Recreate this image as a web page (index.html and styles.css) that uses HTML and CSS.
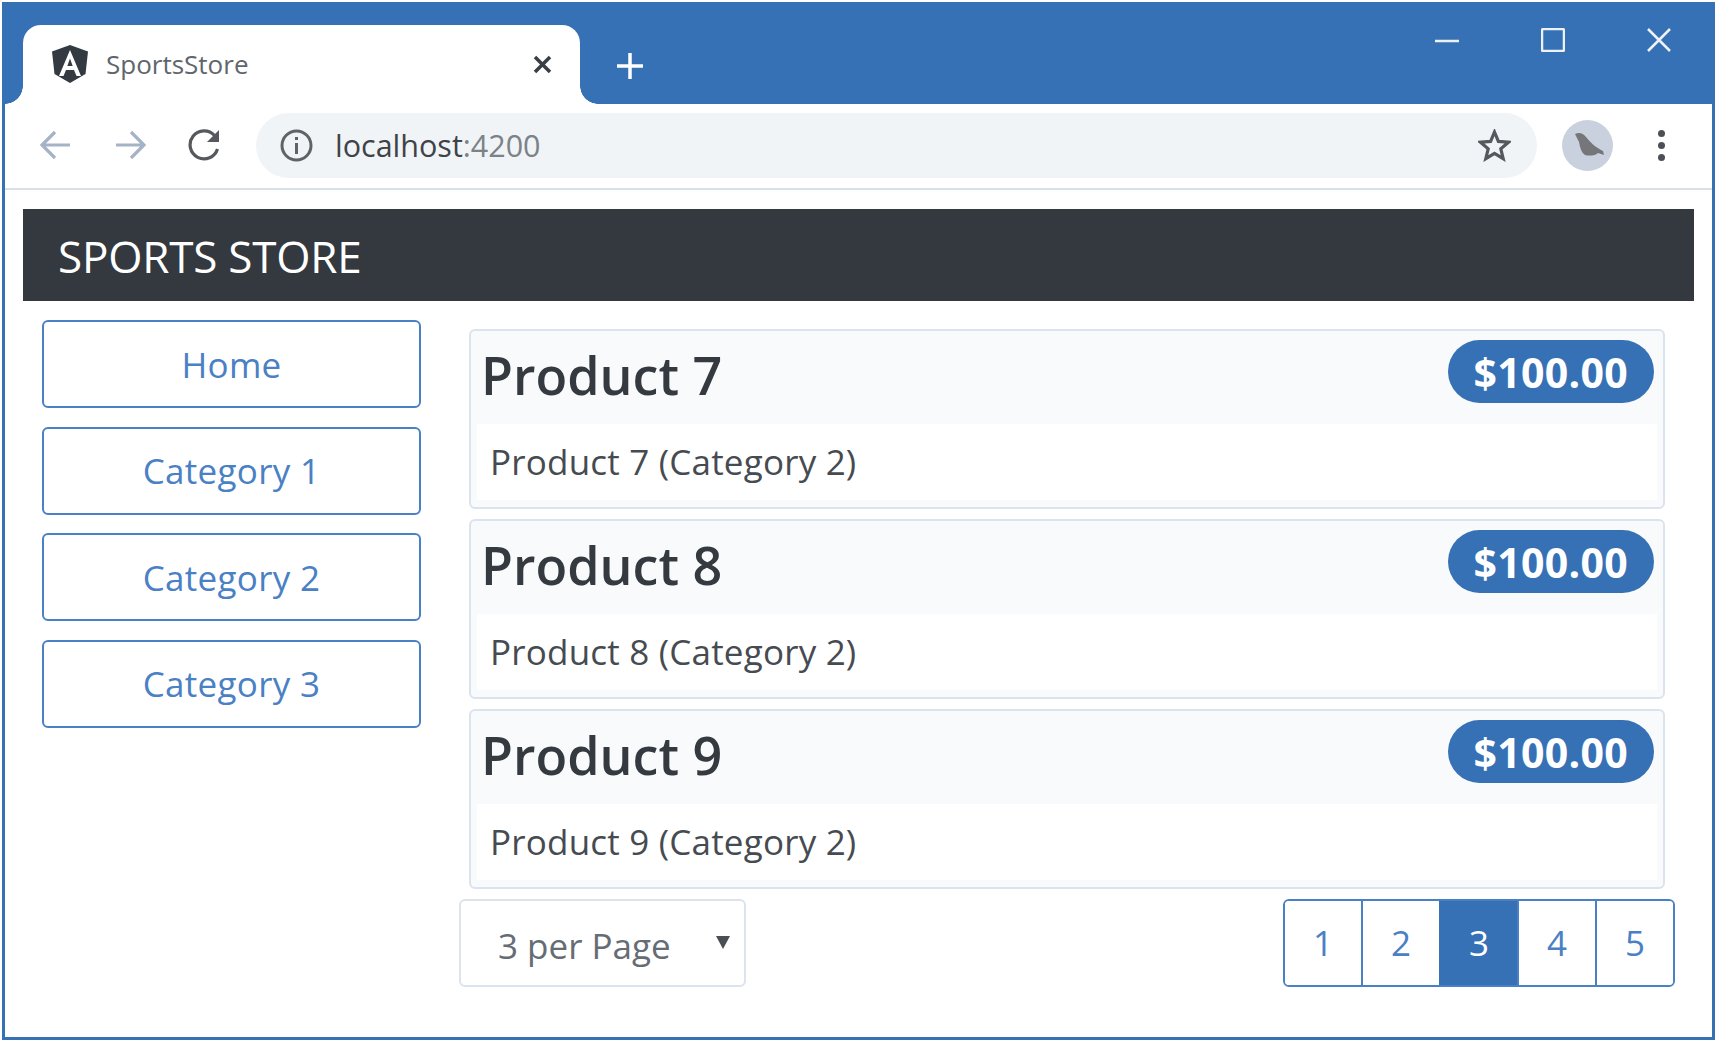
FILE: index.html
```html
<!DOCTYPE html>
<html lang="en">
<head>
    <meta charset="UTF-8">
    <meta name="viewport" content="width=device-width, initial-scale=1.0">
    <title>SportsStore</title>
    <link rel="stylesheet" href="styles.css">
</head>
<body>
    <div class="window">
        <!-- Browser title bar -->
        <div class="titlebar">
            <div class="tab">
                <svg class="tab-logo" viewBox="0 0 38 38">
                    <path class="logo-shield" d="M19 0 L37 6.500 L34.500 29 L19 38 L3.500 29 L1 6.500 Z"/>
                    <path class="logo-a" d="M19 5 L8 31 L12.500 31 L15 25 L23 25 L25.500 31 L30 31 Z M19 13.500 L21.700 21 L16.300 21 Z"/>
                </svg>
                <span class="tab-title">SportsStore</span>
                <svg class="tab-close" viewBox="0 0 19 19">
                    <path d="M2 2 L17 17 M17 2 L2 17"/>
                </svg>
            </div>
            <svg class="new-tab" viewBox="0 0 28 28">
                <path d="M14 1 V27 M1 14 H27"/>
            </svg>
            <div class="window-controls">
                <div class="control">
                    <svg viewBox="0 0 24 24"><path d="M0 13 H24"/></svg>
                </div>
                <div class="control">
                    <svg viewBox="0 0 24 24"><rect x="1" y="1" width="22" height="22" rx="1.500"/></svg>
                </div>
                <div class="control">
                    <svg viewBox="0 0 24 24"><path d="M1 1 L23 23 M23 1 L1 23"/></svg>
                </div>
            </div>
        </div>

        <!-- Browser toolbar -->
        <div class="toolbar">
            <svg class="nav-icon nav-off" viewBox="0 0 32 32">
                <path d="M30 16 H3 M15 3 L2 16 L15 29"/>
            </svg>
            <svg class="nav-icon nav-off" viewBox="0 0 32 32">
                <path d="M2 16 H29 M17 3 L30 16 L17 29"/>
            </svg>
            <svg class="nav-icon nav-on" viewBox="0 0 32 32">
                <path d="M29.500 20 A14 14 0 1 1 26.500 6.500"/>
                <path class="reload-tip" d="M31 1 V13 H19 Z"/>
            </svg>
            <div class="omnibox">
                <svg class="info-icon" viewBox="0 0 33 33">
                    <circle cx="16.500" cy="16.500" r="14.500"/>
                    <path d="M16.500 14 V25"/>
                    <path d="M16.500 8 V11"/>
                </svg>
                <span class="url">localhost<span class="url-port">:4200</span></span>
                <svg class="star-icon" viewBox="0 0 33 33">
                    <path d="M16.500 3 L20.400 12.400 L30.500 13.200 L22.800 19.800 L25.200 29.700 L16.500 24.400 L7.800 29.700 L10.200 19.800 L2.500 13.200 L12.600 12.400 Z"/>
                </svg>
            </div>
            <div class="avatar">
                <svg viewBox="0 0 51 51">
                    <path class="bird" d="M13 14 C17 12 21 13 24 17 C28 22 33 27 41 31 L42 35 L36 33 C33 36 27 36 23 35 C19 32 18 27 17 22 Z"/>
                </svg>
            </div>
            <div class="menu-dots">
                <span></span>
                <span></span>
                <span></span>
            </div>
        </div>

        <!-- Store page -->
        <div class="page">
            <div class="navbar">SPORTS STORE</div>
            <div class="content">
                <div class="sidebar">
                    <button class="cat-btn">Home</button>
                    <button class="cat-btn">Category 1</button>
                    <button class="cat-btn">Category 2</button>
                    <button class="cat-btn">Category 3</button>
                </div>
                <div class="main">
                    <div class="product">
                        <div class="product-head">
                            <h4>Product 7</h4>
                            <span class="price">$100.00</span>
                        </div>
                        <div class="product-body">Product 7 (Category 2)</div>
                    </div>
                    <div class="product">
                        <div class="product-head">
                            <h4>Product 8</h4>
                            <span class="price">$100.00</span>
                        </div>
                        <div class="product-body">Product 8 (Category 2)</div>
                    </div>
                    <div class="product">
                        <div class="product-head">
                            <h4>Product 9</h4>
                            <span class="price">$100.00</span>
                        </div>
                        <div class="product-body">Product 9 (Category 2)</div>
                    </div>
                    <div class="pager-row">
                        <div class="per-page">
                            <select>
                                <option>3 per Page</option>
                                <option>4 per Page</option>
                                <option>6 per Page</option>
                                <option>8 per Page</option>
                            </select>
                        </div>
                        <div class="pager">
                            <button class="page-btn">1</button>
                            <button class="page-btn">2</button>
                            <button class="page-btn active">3</button>
                            <button class="page-btn">4</button>
                            <button class="page-btn">5</button>
                        </div>
                    </div>
                </div>
            </div>
        </div>
    </div>
</body>
</html>
```

FILE: styles.css
```css
/* Global styles */
* {
    box-sizing: border-box;
}

body {
    font-family: "Open Sans", "Noto Sans", sans-serif;
    background-color: white;
    margin: 0;
    padding: 2px;
}

button, select {
    font-family: inherit;
}

/* Browser window */
.window {
    width: 1713px;
    height: 1038px;
    border: 3px solid #3771b5;
    background-color: white;
}

.titlebar {
    display: flex;
    height: 99px;
    background-color: #3771b5;
}

.tab {
    position: relative;
    display: flex;
    align-items: center;
    width: 557px;
    height: 79px;
    margin: 20px 0 0 18px;
    padding: 0 28px 0 28px;
    background-color: white;
    border-radius: 18px 18px 0 0;
}

.tab::before, .tab::after {
    content: "";
    position: absolute;
    bottom: 0;
    width: 18px;
    height: 18px;
}

.tab::before {
    left: -18px;
    background: radial-gradient(circle at 0 0, transparent 17.500px, white 18px);
}

.tab::after {
    right: -18px;
    background: radial-gradient(circle at 100% 0, transparent 17.500px, white 18px);
}

.tab-logo {
    width: 38px;
    height: 38px;
    margin-top: -1px;
}

.logo-shield {
    fill: #333a42;
}

.logo-a {
    fill: white;
    fill-rule: evenodd;
}

.tab-title {
    margin: -2px 0 0 17px;
    font-size: 26px;
    color: #60666c;
}

.tab-close {
    width: 19px;
    height: 19px;
    margin-left: auto;
    fill: none;
    stroke: #3a3f45;
    stroke-width: 3.500;
}

.new-tab {
    width: 28px;
    height: 28px;
    margin: 47px 0 0 36px;
    fill: none;
    stroke: white;
    stroke-width: 3.500;
}

.window-controls {
    display: flex;
    margin-left: auto;
    height: 72px;
}

.control {
    display: flex;
    justify-content: center;
    width: 106px;
    padding-top: 23px;
}

.control svg {
    width: 24px;
    height: 24px;
    fill: none;
    stroke: #eef2f8;
    stroke-width: 2.500;
}

/* Browser toolbar */
.toolbar {
    display: flex;
    align-items: center;
    height: 86px;
    padding: 0 0 2px 35px;
    border-bottom: 2px solid #d8e0ea;
}

.nav-icon {
    width: 32px;
    height: 32px;
    margin-right: 42px;
    fill: none;
    stroke-width: 3.200;
}

.nav-off {
    stroke: #a5b3c6;
}

.nav-on {
    stroke: #55595e;
    margin-right: 36px;
}

.reload-tip {
    fill: #55595e;
    stroke: none;
}

.omnibox {
    display: flex;
    align-items: center;
    width: 1281px;
    height: 65px;
    padding: 0 26px 0 24px;
    background-color: #f1f4f6;
    border-radius: 33px;
}

.info-icon {
    width: 33px;
    height: 33px;
    fill: none;
    stroke: #5f6368;
    stroke-width: 3;
}

.url {
    margin-left: 22px;
    font-size: 30.500px;
    color: #3e4349;
}

.url-port {
    color: #7b8288;
}

.star-icon {
    width: 33px;
    height: 33px;
    margin-left: auto;
    fill: none;
    stroke: #55595e;
    stroke-width: 3.200;
}

.avatar {
    width: 51px;
    height: 51px;
    margin-left: 25px;
    border-radius: 50%;
    background-color: #c9d1de;
}

.avatar svg {
    display: block;
}

.bird {
    fill: #75767a;
}

.menu-dots {
    display: flex;
    flex-direction: column;
    gap: 5px;
    margin-left: 45px;
}

.menu-dots span {
    display: block;
    width: 7px;
    height: 7px;
    border-radius: 50%;
    background-color: #4c5056;
}

/* Store page */
.page {
    padding: 19px 18px 0;
}

.navbar {
    height: 92px;
    padding-left: 35px;
    background-color: #33393f;
    color: white;
    font-size: 44px;
    line-height: 94px;
    letter-spacing: -0.2px;
}

.content {
    display: flex;
    padding: 0 19px;
}

.sidebar {
    display: flex;
    flex-direction: column;
    gap: 18.500px;
    width: 379px;
    margin-top: 19px;
    margin-right: 38px;
}

.cat-btn {
    height: 88px;
    background-color: white;
    border: 2px solid #4a80c4;
    border-radius: 6px;
    color: #4a80c4;
    font-size: 35px;
    letter-spacing: 0.3px;
    padding: 0;
}

.main {
    flex: 1;
    margin-top: 28px;
}

/* Product cards */
.product {
    height: 180px;
    margin: 0 10px 10px;
    background-color: #f9fafb;
    border: 2px solid #dbe3ee;
    border-radius: 6px;
}

.product-head {
    display: flex;
    justify-content: space-between;
    align-items: flex-start;
    height: 93px;
    padding: 9px 9px 0 10px;
}

h4 {
    margin: 0;
    font-size: 52px;
    line-height: 70px;
    font-weight: 600;
    color: #343a40;
}

.price {
    display: flex;
    align-items: center;
    height: 63px;
    padding: 0 26px;
    background-color: #3771b5;
    border-radius: 32px;
    color: white;
    font-size: 41px;
    font-weight: 700;
    letter-spacing: 0.3px;
}

.product-body {
    height: 76px;
    margin: 0 6px;
    padding-left: 13px;
    background-color: white;
    color: #464b51;
    font-size: 35px;
    line-height: 76px;
    letter-spacing: 0.2px;
}

/* Page size and page buttons */
.pager-row {
    display: flex;
    justify-content: space-between;
}

.per-page {
    position: relative;
}

.per-page select {
    width: 287px;
    height: 88px;
    padding: 4px 0 0 37px;
    background-color: white;
    border: 2px solid #dbe3ee;
    border-radius: 6px;
    color: #666c73;
    font-size: 35px;
    appearance: none;
}

.per-page::after {
    content: "";
    position: absolute;
    top: 37px;
    right: 16px;
    border-left: 7px solid transparent;
    border-right: 7px solid transparent;
    border-top: 13px solid #4a4f55;
    pointer-events: none;
}

.pager {
    display: flex;
    width: 392px;
    height: 88px;
    border: 2px solid #4a80c4;
    border-radius: 6px;
    overflow: hidden;
}

.page-btn {
    flex: 1;
    padding: 0 0 2px;
    background-color: white;
    border: none;
    border-left: 2px solid #4a80c4;
    color: #4a80c4;
    font-size: 35px;
}

.page-btn:first-child {
    border-left: none;
}

.page-btn.active {
    background-color: #3771b5;
    border-left-color: #3771b5;
    color: white;
}
```
